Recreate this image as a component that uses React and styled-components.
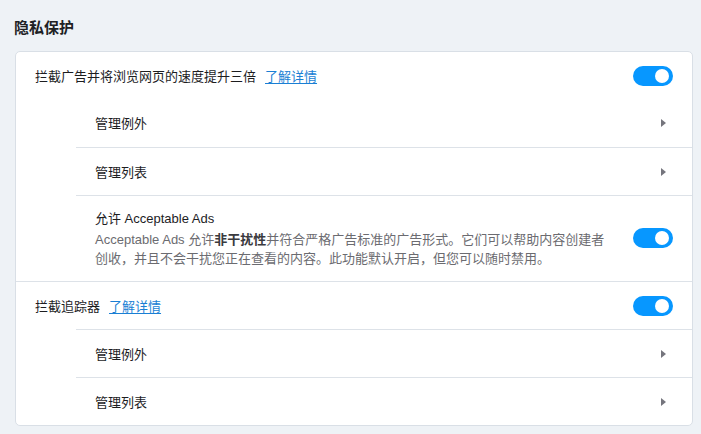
import React from 'react';
import styled, { createGlobalStyle } from 'styled-components';

const GlobalStyle = createGlobalStyle`
  html, body {
    margin: 0;
    background: #eef2f6;
  }
  body {
    font-family: "Liberation Sans", "Noto Sans CJK SC", sans-serif;
    color: #1d1d1f;
    line-height: 19px;
  }
`;

const Page = styled.div`
  padding: 17px 8px 0 15px;
  width: 678px;
`;

const Title = styled.h2`
  margin: 0 0 12px -1px;
  font-size: 15px;
  font-weight: 600;
  line-height: 22px;
  color: #202124;
`;

const Card = styled.div`
  background: #fff;
  border: 1px solid #d9dfe6;
  border-radius: 5px;
  overflow: hidden;
`;

// indented rows draw their divider from the indent, top-level rows across the card
const Row = styled.div`
  display: flex;
  align-items: center;
  min-height: ${(p) => (p.$first ? 47 : 48)}px;
  box-sizing: border-box;
  padding-right: 19px;
  border-top: ${(p) => (p.$divider ? '1px solid #dde2e8' : 'none')};
  margin-left: ${(p) => (p.$sub && p.$divider ? 60 : 0)}px;
  padding-left: ${(p) => (p.$sub ? (p.$divider ? 19 : 79) : 19)}px;
`;

const Tall = styled(Row)`
  padding-top: 12px;
  padding-bottom: 13px;
`;

const Body = styled.div`
  flex: 1;
  min-width: 0;
  padding-right: 24px;
`;

const Label = styled.span`
  font-size: 13px;
  line-height: 19px;
  color: #1d1d1f;
`;

const Link = styled.a`
  margin-left: 9px;
  font-size: 13px;
  color: #1a7fd4;
  text-decoration: underline;
  text-underline-offset: 2px;
  cursor: pointer;
`;

const Desc = styled.p`
  margin: 2px 0 0;
  font-size: 13px;
  line-height: 19px;
  color: #6b6b70;

  b {
    font-weight: 600;
    color: #3a3a3e;
  }
`;

const Toggle = styled.span`
  position: relative;
  flex: none;
  width: 40px;
  height: 20px;
  border-radius: 10px;
  background: ${(p) => (p.$on ? '#0797ff' : '#c7ccd3')};

  &::after {
    content: '';
    position: absolute;
    top: 3px;
    left: ${(p) => (p.$on ? 22 : 4)}px;
    width: 14px;
    height: 14px;
    border-radius: 50%;
    background: #fff;
  }
`;

const Caret = styled.span`
  flex: none;
  width: 0;
  height: 0;
  margin-right: 7px;
  border-top: 4px solid transparent;
  border-bottom: 4px solid transparent;
  border-left: 5px solid #75757d;
`;

function SubRow({ label, divider }) {
  return (
    <Row $sub $divider={divider}>
      <Body>
        <Label>{label}</Label>
      </Body>
      <Caret />
    </Row>
  );
}

export default function App() {
  return (
    <>
      <GlobalStyle />
      <Page>
        <Title>隐私保护</Title>
        <Card>
          <Row $first>
            <Body>
              <Label>拦截广告并将浏览网页的速度提升三倍</Label>
              <Link>了解详情</Link>
            </Body>
            <Toggle $on />
          </Row>
          <SubRow label="管理例外" />
          <SubRow label="管理列表" divider />
          <Tall $sub $divider>
            <Body>
              <Label>允许 Acceptable Ads</Label>
              <Desc>
                Acceptable Ads 允许<b>非干扰性</b>并符合严格广告标准的广告形式。它们可以帮助内容创建者创收，并且不会干扰您正在查看的内容。此功能默认开启，但您可以随时禁用。
              </Desc>
            </Body>
            <Toggle $on />
          </Tall>
          <Row $divider>
            <Body>
              <Label>拦截追踪器</Label>
              <Link>了解详情</Link>
            </Body>
            <Toggle $on />
          </Row>
          <SubRow label="管理例外" divider />
          <SubRow label="管理列表" divider />
        </Card>
      </Page>
    </>
  );
}
